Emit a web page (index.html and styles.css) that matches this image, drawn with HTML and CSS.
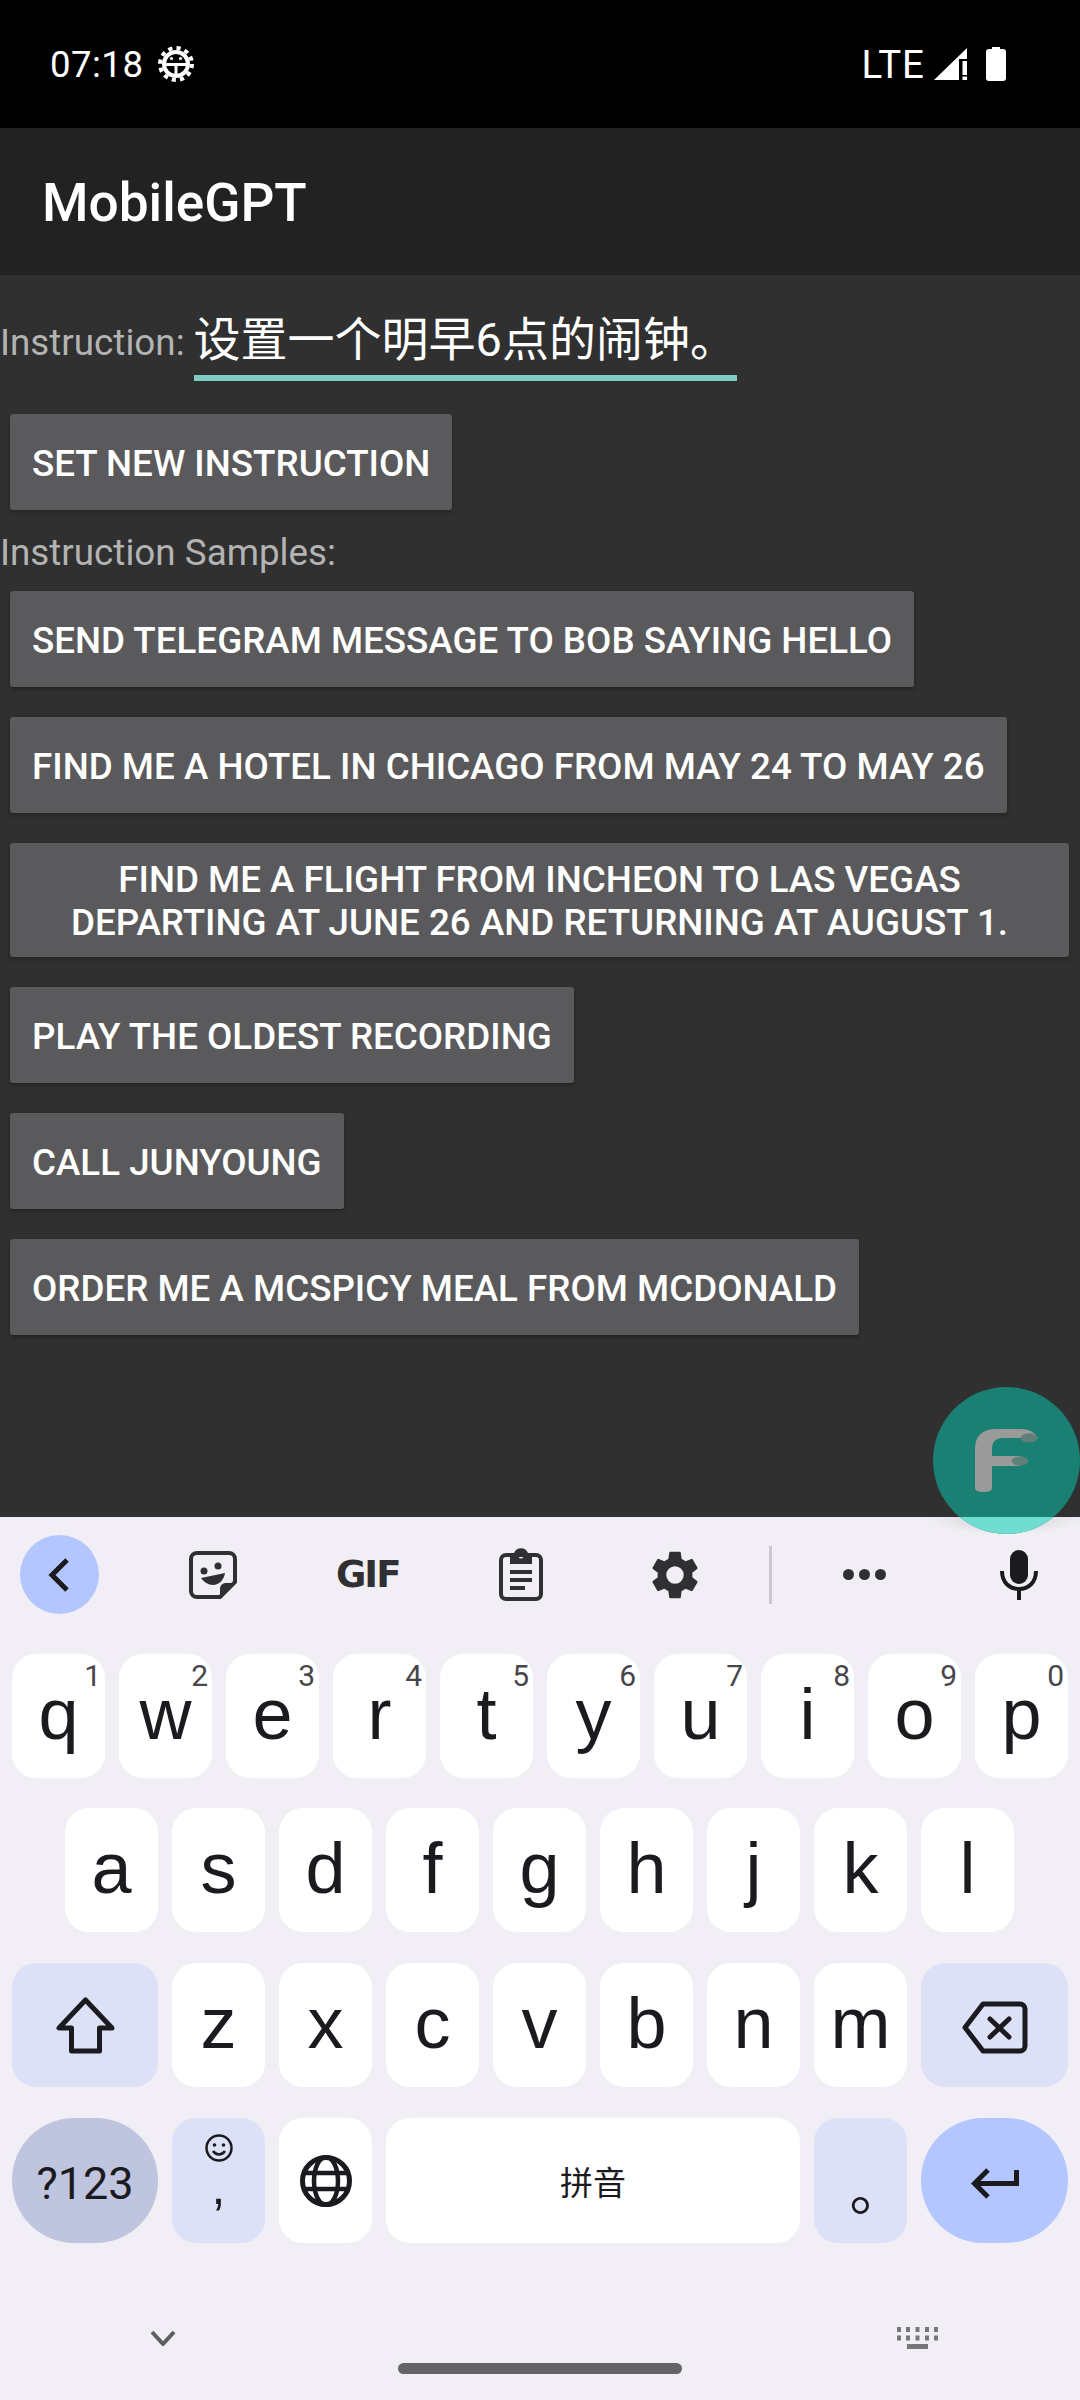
FILE: index.html
```html
<!DOCTYPE html>
<html lang="zh">
<head>
<meta charset="utf-8">
<title>MobileGPT</title>
<link rel="stylesheet" href="styles.css">
</head>
<body>
<div class="phone">
  <header class="status">
    <div class="status-left">
      <span class="clock">07:18</span>
      <svg class="gear-bug" viewBox="0 0 36 36"><circle cx="18" cy="18" r="16" fill="none" stroke="#fff" stroke-width="4" stroke-dasharray="4.190 4.190"/><circle cx="18" cy="18" r="12" fill="none" stroke="#fff" stroke-width="4"/><path fill="#fff" d="M7 17h22v3H7zM16.500 20h3v9h-3z"/><circle cx="13.500" cy="12.500" r="1.600" fill="#fff"/><circle cx="22.500" cy="12.500" r="1.600" fill="#fff"/></svg>
    </div>
    <div class="status-right">
      <span class="lte">LTE</span>
      <svg class="signal" viewBox="0 0 33 32"><path fill="#fff" d="M0 32L33 0V11H25V32zM28.500 13H33V27H28.500zM28.500 28.500H33V32H28.500z"/></svg>
      <svg class="battery" viewBox="0 0 20 34"><path fill="#fff" d="M6 0h8v2h3a3 3 0 0 1 3 3v26a3 3 0 0 1-3 3H3a3 3 0 0 1-3-3V5a3 3 0 0 1 3-3h3z"/></svg>
    </div>
  </header>
  <div class="appbar">MobileGPT</div>
  <main class="content">
    <div class="instruction-row">
      <span class="label">Instruction:</span>
      <span class="field">设置一个明早6点的闹钟。</span>
    </div>
    <button class="btn btn-set">SET NEW INSTRUCTION</button>
    <div class="label samples">Instruction Samples:</div>
    <button class="btn">SEND TELEGRAM MESSAGE TO BOB SAYING HELLO</button>
    <button class="btn">FIND ME A HOTEL IN CHICAGO FROM MAY 24 TO MAY 26</button>
    <button class="btn btn-wide">FIND ME A FLIGHT FROM INCHEON TO LAS VEGAS DEPARTING AT JUNE 26 AND RETURNING AT AUGUST 1.</button>
    <button class="btn">PLAY THE OLDEST RECORDING</button>
    <button class="btn">CALL JUNYOUNG</button>
    <button class="btn">ORDER ME A MCSPICY MEAL FROM MCDONALD</button>
  </main>
  <div class="fab-shadow"></div>
  <div class="fab">
    <svg class="fab-f" viewBox="0 0 63 63"><path fill="#9a9a9a" d="M0 20Q0 0 22 0H46Q58 0 63 9Q55 14 46 9H28Q17 9 17 20V27H45V37H17V59Q17 63 8.500 63Q0 63 0 59Z"/><ellipse cx="54" cy="9" rx="8.500" ry="4.500" fill="#5f7f78"/><ellipse cx="45" cy="32" rx="8.500" ry="4.500" fill="#5f7f78"/></svg>
  </div>
  <section class="keyboard">
    <div class="toolbar">
      <div class="tool-back"><svg viewBox="0 0 24 36" class="i-back"><path fill="none" stroke="#1b1b1f" stroke-width="5" d="M20 3L5 18L20 33"/></svg></div>
      <svg class="tool t-sticker" viewBox="0 0 48 48"><path fill="none" stroke="#303033" stroke-width="4" stroke-linejoin="round" d="M8 2h32a6 6 0 0 1 6 6v23L31 46H8a6 6 0 0 1-6-6V8a6 6 0 0 1 6-6z"/><path fill="#303033" d="M31 47V38c0-4 3-6 6-6H47zM12 27L36 22c-1 7-6 12-12 12-5 0-9-3-12-7z"/><circle cx="15" cy="20" r="3.500" fill="#303033"/><circle cx="29" cy="15" r="3.500" fill="#303033"/></svg>
      <span class="gif">GIF</span>
      <svg class="tool t-clip" viewBox="0 0 44 53"><rect x="2" y="7" width="40" height="44" rx="5" fill="none" stroke="#303033" stroke-width="4"/><path fill="#303033" fill-rule="evenodd" d="M11 5h4a7.500 7.500 0 0 1 14 0h4v11H11zM22 5.500a2.500 2.500 0 1 0 .01 0z"/><path fill="#303033" d="M11 22h22v4H11zM11 30h22v4H11zM11 38h15v4H11z"/></svg>
      <svg class="tool t-gear" viewBox="0 0 24 24"><path fill="#303033" d="M19.140 12.940c.04-.3.060-.61.060-.94 0-.32-.020-.64-.070-.94l2.030-1.580a.49.49 0 0 0 .12-.61l-1.920-3.320a.49.49 0 0 0-.59-.22l-2.390.96a7 7 0 0 0-1.620-.94l-.36-2.540a.48.48 0 0 0-.48-.41h-3.840a.47.47 0 0 0-.47.41l-.36 2.540a7.200 7.200 0 0 0-1.620.94l-2.390-.96a.48.48 0 0 0-.59.22L2.740 8.870a.47.47 0 0 0 .12.61l2.030 1.580c-.050.3-.090.63-.090.94s.020.64.070.94l-2.030 1.580a.49.49 0 0 0-.12.61l1.920 3.320c.12.22.37.29.59.22l2.390-.96c.5.380 1.030.7 1.620.94l.36 2.540c.050.24.240.41.480.41h3.840c.24 0 .44-.17.47-.41l.36-2.540a6.900 6.900 0 0 0 1.620-.94l2.390.96c.22.080.47 0 .59-.22l1.920-3.320a.46.46 0 0 0-.12-.61zM12 15.600A3.600 3.600 0 1 1 12 8.400a3.600 3.600 0 0 1 0 7.200z"/></svg>
      <span class="divider"></span>
      <svg class="tool t-dots" viewBox="0 0 43 11"><circle cx="5.500" cy="5.500" r="5.500" fill="#303033"/><circle cx="21.500" cy="5.500" r="5.500" fill="#303033"/><circle cx="37.500" cy="5.500" r="5.500" fill="#303033"/></svg>
      <svg class="tool t-mic" viewBox="0 0 38 50"><path fill="#1b1b1f" d="M19 0a9 9 0 0 1 9 9v16a9 9 0 0 1-18 0V9a9 9 0 0 1 9-9z"/><path fill="none" stroke="#1b1b1f" stroke-width="4" d="M2 21c0 12 8 18 17 18s17-6 17-18M19 38v12"/></svg>
    </div>
    <div class="row row-top">
      <div class="key"><span class="hint">1</span>q</div>
      <div class="key"><span class="hint">2</span>w</div>
      <div class="key"><span class="hint">3</span>e</div>
      <div class="key"><span class="hint">4</span>r</div>
      <div class="key"><span class="hint">5</span>t</div>
      <div class="key"><span class="hint">6</span>y</div>
      <div class="key"><span class="hint">7</span>u</div>
      <div class="key"><span class="hint">8</span>i</div>
      <div class="key"><span class="hint">9</span>o</div>
      <div class="key"><span class="hint">0</span>p</div>
    </div>
    <div class="row row-home">
      <div class="key">a</div><div class="key">s</div><div class="key">d</div><div class="key">f</div><div class="key">g</div><div class="key">h</div><div class="key">j</div><div class="key">k</div><div class="key">l</div>
    </div>
    <div class="row row-third">
      <div class="key key-left key-mod key-icon"><svg class="k-shift" viewBox="0 0 59 57"><path fill="none" stroke="#1b1b1f" stroke-width="5" stroke-linejoin="round" d="M29.500 3L3 31H15.500V54H43.500V31H56z"/></svg></div>
      <div class="key">z</div><div class="key">x</div><div class="key">c</div><div class="key">v</div><div class="key">b</div><div class="key">n</div><div class="key">m</div>
      <div class="key key-right key-mod key-icon"><svg class="k-back" viewBox="0 0 66 53"><path fill="none" stroke="#1b1b1f" stroke-width="5" stroke-linejoin="round" d="M21 3H58a5 5 0 0 1 5 5V45a5 5 0 0 1-5 5H21L3 26.500z"/><path fill="none" stroke="#1b1b1f" stroke-width="5" stroke-linecap="round" d="M28 18L47 36M47 18L28 36"/></svg></div>
    </div>
    <div class="row row-bottom">
      <div class="key key-left key-sym">?123</div>
      <div class="key key-mod key-comma"><svg class="k-smile" viewBox="0 0 28 28"><circle cx="14" cy="14" r="12.500" fill="none" stroke="#1b1b1f" stroke-width="2.500"/><circle cx="9.500" cy="11" r="1.800" fill="#1b1b1f"/><circle cx="18.500" cy="11" r="1.800" fill="#1b1b1f"/><path fill="none" stroke="#1b1b1f" stroke-width="2.500" d="M8 17c3 4.500 9 4.500 12 0"/></svg><span class="comma">,</span></div>
      <div class="key key-icon"><svg class="k-globe" viewBox="0 0 52 52"><g fill="none" stroke="#1b1b1f"><circle cx="26" cy="26" r="23.500" stroke-width="5"/><ellipse cx="26" cy="26" rx="12" ry="24" stroke-width="4.500"/><path stroke-width="4.500" d="M3 18H49M3 34H49"/></g></svg></div>
      <div class="key key-space">拼音</div>
      <div class="key key-mod key-period"><span>。</span></div>
      <div class="key key-right key-enter key-icon"><svg class="k-enter" viewBox="0 0 49 31"><path fill="none" stroke="#1b1b1f" stroke-width="5" d="M46.500 2V15.500H5M18 2L4.500 15.500L18 29"/></svg></div>
    </div>
    <div class="navbar">
      <svg class="nav-down" viewBox="0 0 26 16"><path fill="none" stroke="#5f5f62" stroke-width="4" d="M2 2L13 14L24 2"/></svg>
      <svg class="nav-kbd" viewBox="0 0 41 22"><path fill="#77777a" d="M0 0h4v5H0zM9 0h4v5H9zM18.500 0h4v5h-4zM28 0h4v5h-4zM37 0h4v5h-4zM0 8.500h4v5H0zM9 8.500h4v5H9zM18.500 8.500h4v5h-4zM28 8.500h4v5h-4zM37 8.500h4v5h-4zM10 17h21v5H10z"/></svg>
    </div>
    <div class="home-bar"></div>
  </section>
</div>
</body>
</html>
```
FILE: styles.css
```css
* { box-sizing: border-box; }
html, body { margin: 0; padding: 0; }
body { width: 1080px; height: 2400px; overflow: hidden; font-family: Roboto, "Noto Sans CJK SC", sans-serif; background: #303030; }
.phone { position: relative; width: 1080px; height: 2400px; display: flex; flex-direction: column; }
.status { height: 128px; background: #000; color: #fff; display: flex; justify-content: space-between; align-items: center; padding: 0 74px 0 50px; }
.status-left, .status-right { display: flex; align-items: center; }
.clock { font-size: 36.5px; letter-spacing: 0.5px; }
.gear-bug { width: 36px; height: 36px; margin-left: 15px; }
.lte { font-size: 38.5px; letter-spacing: 1px; }
.signal { width: 33px; height: 32px; margin-left: 9px; }
.battery { width: 20px; height: 34px; margin-left: 19px; }
.appbar { height: 147px; background: #222; color: #fff; font-size: 53.2px; font-weight: 500; display: flex; align-items: center; padding: 2px 0 0 42px; }
.content { height: 1242px; background: #303030; display: flex; flex-direction: column; align-items: flex-start; }
.instruction-row { display: flex; align-items: flex-start; height: 129px; padding-top: 31px; }
.label { color: #b3b3b3; font-size: 36.8px; line-height: 50px; }
.instruction-row .label { margin-top: 12px; }
.field { margin-left: 9px; width: 543px; height: 75px; padding-top: 3px; border-bottom: 6px solid #80cbc4; color: #fff; font-size: 47px; line-height: 62px; white-space: nowrap; font-family: Roboto, "Noto Sans CJK SC", sans-serif; }
.btn { display: block; margin: 0 0 30px 10px; min-height: 96px; padding: 15px 22px 13px; border: 0; border-radius: 3px; background: #5a5a5c; color: #fff; font-family: Roboto, sans-serif; font-weight: 500; font-size: 36.75px; line-height: 43px; text-align: center; box-shadow: 0 2px 4px rgba(0,0,0,.3); }
.btn-set { margin-top: 10px; margin-bottom: 18px; }
.btn-wide { width: 1059px; padding: 15px 40px 13px; }
.samples { height: 50px; margin-bottom: 13px; }
.fab-shadow { position: absolute; left: 930px; top: 1517px; width: 150px; height: 17px; background: radial-gradient(ellipse at 50% 0, rgba(0,0,0,.14), rgba(0,0,0,0) 75%); }
.fab { position: absolute; left: 933px; top: 1387px; width: 147px; height: 147px; border-radius: 50%; background: #1a8073; display: flex; align-items: center; justify-content: center; overflow: hidden; }
.fab::after { content: ""; position: absolute; left: 0; right: 0; top: 130px; bottom: 0; background: #6fddd0; }
.fab-f { width: 63px; height: 63px; }
.keyboard { flex: 1; background: #f1eff5; padding-top: 18px; }
.toolbar { height: 79px; display: flex; align-items: center; margin-bottom: 40px; }
.tool-back { width: 79px; height: 79px; border-radius: 50%; background: #b3c6ff; margin-left: 20px; display: flex; align-items: center; justify-content: center; }
.i-back { width: 24px; height: 36px; margin-left: -2px; }
.tool { display: block; flex: none; }
.t-sticker { width: 48px; height: 48px; margin-left: 90px; }
.gif { width: 63px; margin-left: 99px; font-family: "DejaVu Sans", sans-serif; font-weight: 700; font-size: 37px; line-height: 40px; letter-spacing: -2px; color: #303033; white-space: nowrap; }
.t-clip { width: 44px; height: 53px; margin-left: 100px; }
.t-gear { width: 58px; height: 58px; margin-left: 103px; }
.divider { width: 3px; height: 58px; background: #cbc9cf; margin-left: 65px; }
.t-dots { width: 43px; height: 11px; margin-left: 71px; }
.t-mic { width: 38px; height: 50px; margin-left: 114px; }
.row { display: flex; gap: 14px; padding: 0 12px; height: 124px; }
.row-top { margin-bottom: 30px; }
.row-home { padding-left: 65px; margin-bottom: 31px; }
.row-third { margin-bottom: 31px; }
.row-bottom { height: 125px; }
.key { position: relative; flex: none; width: 93px; height: 100%; border-radius: 24px; background: #fff; color: #1b1b1f; font-family: "Liberation Sans", sans-serif; font-size: 72px; display: flex; align-items: center; justify-content: center; padding-bottom: 4px; }
.key-icon { padding-bottom: 0; }
.hint { position: absolute; top: 7px; right: 4px; font-size: 30px; line-height: 30px; color: #47474b; font-family: Roboto, sans-serif; }
.key-left { width: 146px; }
.key-right { width: 147px; }
.key-mod { background: #dde1f7; }
.key-sym { background: #bfc5de; border-radius: 62px; font-family: Roboto, sans-serif; font-size: 45px; padding: 5px 0 0; }
.key-enter { background: #b3c6ff; border-radius: 62px; padding-top: 5px; }
.key-comma { flex-direction: column; justify-content: flex-start; padding: 16px 0 0; }
.k-smile { width: 28px; height: 28px; flex: none; }
.comma { font-size: 50px; line-height: 50px; }
.key-space { width: 414px; font-family: "Noto Sans CJK SC", sans-serif; font-size: 33px; padding: 0; }
.key-period span { font-family: "Noto Sans CJK SC", sans-serif; font-size: 56px; line-height: 56px; align-self: flex-end; position: relative; left: 17px; top: -25px; }
.k-globe { width: 52px; height: 52px; }
.k-shift { width: 59px; height: 57px; }
.k-back { width: 66px; height: 53px; margin-top: 5px; }
.k-enter { width: 49px; height: 31px; }
.navbar { height: 22px; display: flex; justify-content: space-between; align-items: center; padding: 0 142px 0 150px; margin-top: 84px; }
.nav-down { width: 26px; height: 16px; }
.nav-kbd { width: 41px; height: 22px; }
.home-bar { width: 284px; height: 11px; border-radius: 6px; background: #646466; margin: 14px auto 0; }
```
